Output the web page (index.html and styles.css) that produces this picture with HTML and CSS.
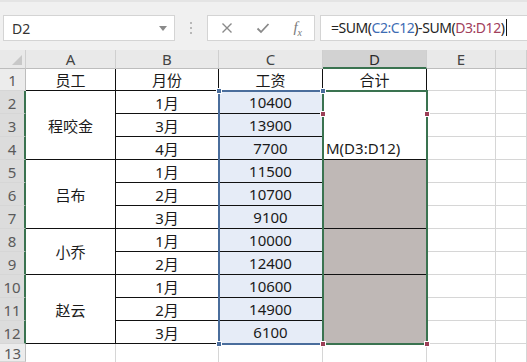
FILE: index.html
```html
<!DOCTYPE html>
<html lang="zh">
<head>
    <meta charset="UTF-8">
    <title>工资表</title>
    <link rel="stylesheet" href="styles.css">
</head>
<body>

    <!-- Name box + formula bar -->
    <div class="toolbar">
        <div class="namebox">
            <span>D2</span>
            <svg class="drop" width="8" height="5" viewBox="0 0 8 5"><path d="M0 0 L8 0 L4 5 Z" fill="#8a8a8a"/></svg>
        </div>
        <div class="grip"><i></i><i></i><i></i></div>
        <div class="fbuttons">
            <svg width="12" height="12" viewBox="0 0 12 12"><path d="M1.5 1.5 L10.5 10.5 M10.5 1.5 L1.5 10.5" stroke="#8a8a8a" stroke-width="1.4"/></svg>
            <svg width="14" height="12" viewBox="0 0 14 12"><path d="M1.5 6.5 L5 10 L12.5 2" stroke="#8a8a8a" stroke-width="1.8" fill="none"/></svg>
            <span class="fx">f<sub>x</sub></span>
        </div>
        <div class="formula">=SUM(<span class="ref-c">C2:C12</span>)-SUM(<span class="ref-d">D3:D12</span>)<span class="cursor"></span></div>
    </div>

    <!-- Worksheet -->
    <div class="sheet">
        <div class="hd corner"><svg width="10" height="10" viewBox="0 0 10 10"><path d="M10 0 L10 10 L0 10 Z" fill="#c8c8c8"/></svg></div>
        <div class="hd col">A</div>
        <div class="hd col">B</div>
        <div class="hd col">C</div>
        <div class="hd col sel">D</div>
        <div class="hd col">E</div>
        <div class="hd col"></div>

        <div class="hd row r1">1</div>
        <div class="c t">员工</div>
        <div class="c t">月份</div>
        <div class="c t">工资</div>
        <div class="c t">合计</div>
        <div class="c"></div>
        <div class="c"></div>

        <div class="hd row sel" style="grid-row: 3">2</div>
        <div class="hd row sel" style="grid-row: 4">3</div>
        <div class="hd row sel" style="grid-row: 5">4</div>
        <div class="hd row sel" style="grid-row: 6">5</div>
        <div class="hd row sel" style="grid-row: 7">6</div>
        <div class="hd row sel" style="grid-row: 8">7</div>
        <div class="hd row sel" style="grid-row: 9">8</div>
        <div class="hd row sel" style="grid-row: 10">9</div>
        <div class="hd row sel" style="grid-row: 11">10</div>
        <div class="hd row sel" style="grid-row: 12">11</div>
        <div class="hd row sel" style="grid-row: 13">12</div>
        <div class="hd row" style="grid-row: 14">13</div>

        <!-- 员工 (merged) -->
        <div class="c t name" style="grid-row: 3 / 6">程咬金</div>
        <div class="c t name" style="grid-row: 6 / 9">吕布</div>
        <div class="c t name" style="grid-row: 9 / 11">小乔</div>
        <div class="c t name" style="grid-row: 11 / 14">赵云</div>

        <!-- 月份 -->
        <div class="c t b" style="grid-row: 3">1月</div>
        <div class="c t b" style="grid-row: 4">3月</div>
        <div class="c t b" style="grid-row: 5">4月</div>
        <div class="c t b" style="grid-row: 6">1月</div>
        <div class="c t b" style="grid-row: 7">2月</div>
        <div class="c t b" style="grid-row: 8">3月</div>
        <div class="c t b" style="grid-row: 9">1月</div>
        <div class="c t b" style="grid-row: 10">2月</div>
        <div class="c t b" style="grid-row: 11">1月</div>
        <div class="c t b" style="grid-row: 12">2月</div>
        <div class="c t b" style="grid-row: 13">3月</div>

        <!-- 工资 -->
        <div class="c t pay" style="grid-row: 3">10400</div>
        <div class="c t pay" style="grid-row: 4">13900</div>
        <div class="c t pay" style="grid-row: 5">7700</div>
        <div class="c t pay" style="grid-row: 6">11500</div>
        <div class="c t pay" style="grid-row: 7">10700</div>
        <div class="c t pay" style="grid-row: 8">9100</div>
        <div class="c t pay" style="grid-row: 9">10000</div>
        <div class="c t pay" style="grid-row: 10">12400</div>
        <div class="c t pay" style="grid-row: 11">10600</div>
        <div class="c t pay" style="grid-row: 12">14900</div>
        <div class="c t pay" style="grid-row: 13">6100</div>

        <!-- 合计 (merged) -->
        <div class="c t sum edit" style="grid-row: 3 / 6">M(D3:D12)</div>
        <div class="c t sum fill" style="grid-row: 6 / 9"></div>
        <div class="c t sum fill" style="grid-row: 9 / 11"></div>
        <div class="c t sum fill" style="grid-row: 11 / 14"></div>

        <!-- empty columns E, F and row 13 -->
        <div class="c e" style="grid-row: 3"></div><div class="c f" style="grid-row: 3"></div>
        <div class="c e" style="grid-row: 4"></div><div class="c f" style="grid-row: 4"></div>
        <div class="c e" style="grid-row: 5"></div><div class="c f" style="grid-row: 5"></div>
        <div class="c e" style="grid-row: 6"></div><div class="c f" style="grid-row: 6"></div>
        <div class="c e" style="grid-row: 7"></div><div class="c f" style="grid-row: 7"></div>
        <div class="c e" style="grid-row: 8"></div><div class="c f" style="grid-row: 8"></div>
        <div class="c e" style="grid-row: 9"></div><div class="c f" style="grid-row: 9"></div>
        <div class="c e" style="grid-row: 10"></div><div class="c f" style="grid-row: 10"></div>
        <div class="c e" style="grid-row: 11"></div><div class="c f" style="grid-row: 11"></div>
        <div class="c e" style="grid-row: 12"></div><div class="c f" style="grid-row: 12"></div>
        <div class="c e" style="grid-row: 13"></div><div class="c f" style="grid-row: 13"></div>
        <div class="c last" style="grid-row: 14"></div>
        <div class="c last" style="grid-row: 14"></div>
        <div class="c last" style="grid-row: 14"></div>
        <div class="c last" style="grid-row: 14"></div>
        <div class="c last" style="grid-row: 14"></div>
        <div class="c last" style="grid-row: 14"></div>

        <!-- Formula reference ranges and selection (drawn over the cells) -->
        <div class="range-c"></div>
        <div class="selection"></div>
        <div class="handle blue" style="left: 216px; top: 38px"></div>
        <div class="handle blue" style="left: 320px; top: 38px"></div>
        <div class="handle blue" style="left: 216px; top: 291px"></div>
        <div class="handle red" style="left: 320px; top: 61px"></div>
        <div class="handle red" style="left: 424px; top: 61px"></div>
        <div class="handle red" style="left: 320px; top: 291px"></div>
        <div class="handle red" style="left: 424px; top: 291px"></div>
    </div>

</body>
</html>
```

FILE: styles.css
```css
body {
    margin: 0;
    width: 527px;
    height: 362px;
    overflow: hidden;
    background: #ffffff;
    font-family: "Noto Sans", "Noto Sans CJK SC", sans-serif;
    color: #1a1a1a;
}

/* Formula bar area */
.toolbar {
    height: 50px;
    box-sizing: border-box;
    padding: 13px 0 0 3px;
    background: #f0f0f0;
    border-top: 2px solid #e4e4e4;
    display: flex;
    align-items: flex-start;
}

.namebox {
    width: 172px;
    height: 26px;
    box-sizing: border-box;
    background: #ffffff;
    border: 1px solid #d4d4d4;
    display: flex;
    align-items: center;
    justify-content: space-between;
    padding: 0 7px 0 8px;
    font-size: 14px;
    color: #333;
}

.grip {
    width: 32px;
    height: 26px;
    display: flex;
    flex-direction: column;
    align-items: center;
    justify-content: center;
    gap: 3px;
}

.grip i {
    width: 2px;
    height: 2px;
    background: #b8b8b8;
}

.fbuttons {
    width: 108px;
    height: 26px;
    box-sizing: border-box;
    background: #ffffff;
    border: 1px solid #d4d4d4;
    display: flex;
    align-items: center;
    justify-content: space-between;
    padding: 0 12px 0 13px;
}

.fx {
    font-family: "Liberation Serif", serif;
    font-style: italic;
    font-size: 15px;
    color: #7a7a7a;
}

.fx sub {
    font-size: 10px;
}

.formula {
    flex: 1;
    height: 26px;
    margin-left: 5px;
    box-sizing: border-box;
    background: #ffffff;
    border: 1px solid #d4d4d4;
    border-right: none;
    padding-left: 10px;
    font-size: 14px;
    letter-spacing: -0.45px;
    line-height: 24px;
    color: #222;
    white-space: nowrap;
}

.ref-c { color: #3d6cb3; }
.ref-d { color: #a2405c; }

.cursor {
    display: inline-block;
    width: 1px;
    height: 17px;
    background: #111;
    vertical-align: -3px;
    margin-left: 2px;
}

/* Worksheet grid */
.sheet {
    position: relative;
    display: grid;
    grid-template-columns: 26px 90px 103px 104px 104px 69px 31px;
    grid-template-rows: 19px 22px repeat(11, 23px) 18px;
}

.hd {
    box-sizing: border-box;
    background: #e9e9e9;
    color: #444;
    font-size: 15px;
    display: flex;
    align-items: center;
    justify-content: center;
    border-right: 1px solid #cfcfcf;
    border-bottom: 1px solid #bdbdbd;
}

.hd.corner {
    justify-content: flex-end;
    align-items: flex-end;
    padding: 0 3px 3px 0;
}

.hd.col.sel {
    background: #d2d2d2;
    border-bottom: 2px solid #3a7350;
    color: #2a2a2a;
}

.hd.row {
    grid-column: 1;
    background: #ececec;
    color: #5a5a5a;
    border-right: 1px solid #bdbdbd;
    border-bottom: 1px solid #d6d6d6;
    padding-top: 1px;
}

.hd.row.sel {
    background: #dcdcdc;
    border-right: 2px solid #3a7350;
}

.c {
    box-sizing: border-box;
    border-right: 1px solid #d6d6d6;
    border-bottom: 1px solid #d6d6d6;
    font-size: 15px;
    display: flex;
    align-items: center;
    justify-content: center;
}

.c.t {
    border-color: #111;
}

.name { grid-column: 2; }
.b { grid-column: 3; }
.e { grid-column: 6; }
.f { grid-column: 7; }
.last { border-bottom: none; }

.pay {
    grid-column: 4;
    background: #e6ecf7;
}

.sum { grid-column: 5; }

.edit {
    align-items: flex-end;
    justify-content: flex-start;
    padding: 0 0 1px 3px;
}

.fill {
    background: #bfb8b6;
}

/* Overlays: formula range and active selection */
.range-c {
    position: absolute;
    left: 218px;
    top: 40px;
    width: 106px;
    height: 255px;
    box-sizing: border-box;
    border: 2px solid #4a6d9c;
}

.selection {
    position: absolute;
    left: 322px;
    top: 40px;
    width: 106px;
    height: 255px;
    box-sizing: border-box;
    border: 2px solid #3a7350;
}

.handle {
    position: absolute;
    width: 6px;
    height: 6px;
    box-sizing: border-box;
    border: 1px solid #ffffff;
}

.handle.blue { background: #4a6d9c; }
.handle.red { background: #9b3f57; }
```
